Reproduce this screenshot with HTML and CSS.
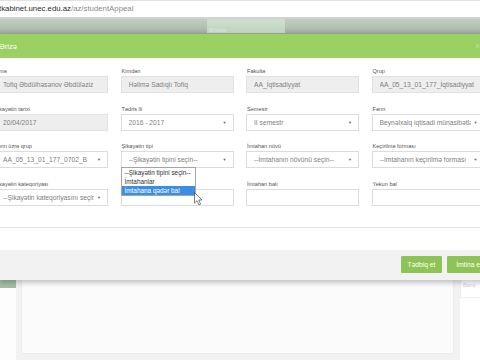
FILE: index.html
```html
<!DOCTYPE html>
<html lang="az">
<head>
<meta charset="utf-8">
<title>studentAppeal</title>
<link rel="stylesheet" href="styles.css">
</head>
<body>
<div class="urlbar"><span class="host">tkabinet.unec.edu.az</span><span class="path">/az/studentAppeal</span></div>
<div class="dimbar">
  <div class="dimbtn">Ərizələr</div>
</div>
<div class="modal">
  <div class="mhead"><span class="title">Ərizə</span><span class="close">×</span></div>
  <div class="mbody">
    <div class="grid">
      <div class="field"><div class="lbl">Kimə</div><div class="ctl ro"><span class="val">Tofiq Əbdülhəsənov Əbdüləziz</span></div></div>
      <div class="field"><div class="lbl">Kimdən</div><div class="ctl ro"><span class="val">Həlimə Sadıqlı Tofiq</span></div></div>
      <div class="field"><div class="lbl">Fakultə</div><div class="ctl ro"><span class="val">AA_İqtisadiyyat</span></div></div>
      <div class="field"><div class="lbl">Qrup</div><div class="ctl ro"><span class="val">AA_05_13_01_177_İqtisadiyyat</span></div></div>

      <div class="field"><div class="lbl">Şikayətin tarixi</div><div class="ctl ro"><span class="val">20/04/2017</span></div></div>
      <div class="field"><div class="lbl">Tədris ili</div><div class="ctl sel"><span class="val">2016 - 2017</span><span class="caret">▼</span></div></div>
      <div class="field"><div class="lbl">Semestr</div><div class="ctl sel"><span class="val">II semestr</span><span class="caret">▼</span></div></div>
      <div class="field"><div class="lbl">Fənn</div><div class="ctl sel"><span class="val">Beynəlxalq iqtisadi münasibətlər</span><span class="caret">▼</span></div></div>

      <div class="field"><div class="lbl">Fənn üzrə qrup</div><div class="ctl sel"><span class="val">AA_05_13_01_177_0702_B</span><span class="caret">▼</span></div></div>
      <div class="field open"><div class="lbl">Şikayətin tipi</div><div class="ctl sel"><span class="val">--Şikayətin tipini seçin--</span><span class="caret">▼</span></div>
        <div class="popup">
          <div class="opt">--Şikayətin tipini seçin--</div>
          <div class="opt">İmtahanlar</div>
          <div class="opt hl">İmtahana qədər bal</div>
        </div>
        <svg class="cursor" width="9" height="14" viewBox="0 0 9 14"><path d="M0.5 0.5 L0.5 11 L3 8.7 L4.9 13 L6.6 12.2 L4.8 8 L8 8 Z" fill="#fff" stroke="#444" stroke-width="0.8" stroke-linejoin="round"/></svg>
      </div>
      <div class="field"><div class="lbl">İmtahan növü</div><div class="ctl sel"><span class="val">--İmtahanın növünü seçin--</span><span class="caret">▼</span></div></div>
      <div class="field"><div class="lbl">Keçirilmə forması</div><div class="ctl sel"><span class="val">--İmtahanın keçirilmə forması</span><span class="caret">▼</span></div></div>

      <div class="field"><div class="lbl">Şikayətin kateqoriyası</div><div class="ctl sel"><span class="val">--Şikayətin kateqoriyasını seçin--</span><span class="caret">▼</span></div></div>
      <div class="field"><div class="lbl">&nbsp;</div><div class="ctl"></div></div>
      <div class="field"><div class="lbl">İmtahan balı</div><div class="ctl"></div></div>
      <div class="field"><div class="lbl">Yekun bal</div><div class="ctl"></div></div>
    </div>
  </div>
  <div class="mgap"></div>
  <div class="mfoot">
    <button class="btn">Tədbiq et</button>
    <button class="btn">İmtina et</button>
  </div>
</div>
<div class="under">
  <div class="lside"><div class="gtab"></div></div>
  <div class="panel"><div class="inner"></div></div>
  <div class="rside"><div class="rbox">Baxış</div></div>
</div>
</body>
</html>
```
FILE: styles.css
```css
html, body {
  margin: 0;
  padding: 0;
  width: 480px;
  height: 360px;
  overflow: hidden;
  background: #ffffff;
  font-family: "Liberation Sans", Arial, sans-serif;
}

.urlbar {
  height: 19px;
  box-sizing: border-box;
  border-top: 1px solid #e2e2e2;
  border-bottom: 2px solid #d2d2d2;
  background: #ffffff;
  font-size: 7.8px;
  line-height: 16px;
  white-space: nowrap;
  margin-left: -1px;
}
.host { color: #2a2a2a; }
.path { color: #8a8a8a; }

.dimbar {
  height: 15px;
  background: linear-gradient(#c2cdc2 0%, #b3c0b3 55%, #a2b0a2 85%, #93a193 100%);
  display: flex;
  padding-left: 207px;
}
.dimbtn {
  width: 78px;
  height: 14px;
  background: linear-gradient(#cfe0cf, #bfd3bf);
  color: rgba(255,255,255,0.45);
  font-size: 5px;
  line-height: 22px;
  padding-left: 2px;
  box-sizing: border-box;
  overflow: hidden;
}

.modal {
  width: 500px;
  background: #ffffff;
  box-shadow: 0 3px 5px rgba(0,0,0,0.22);
  position: relative;
}
.mhead {
  height: 24px;
  background: #9bd063;
  display: flex;
  align-items: center;
  justify-content: space-between;
  padding-right: 20px;
}
.title {
  color: #ffffff;
  font-size: 7.6px;
  margin-left: -1px;
}
.close {
  color: rgba(255,255,255,0.35);
  font-size: 9px;
}

.mbody {
  height: 170px;
  box-sizing: border-box;
  padding-top: 8px;
  border-bottom: 1px solid #e8e8e8;
}
.grid {
  display: grid;
  grid-template-columns: repeat(4, 113px);
  column-gap: 12.5px;
  row-gap: 10.7px;
  margin-left: -5px;
}
.field {
  position: relative;
}
.lbl {
  height: 10px;
  line-height: 10px;
  font-size: 5.6px;
  color: #555555;
  padding-left: 1px;
  white-space: nowrap;
}
.grid > .field:nth-child(4n+1) .lbl {
  margin-left: -2px;
}
.ctl {
  height: 17px;
  box-sizing: border-box;
  border: 1px solid #dcdcdc;
  background: #ffffff;
  display: flex;
  align-items: center;
  padding: 0 4px 0 7px;
  font-size: 6.7px;
  color: #808080;
  white-space: nowrap;
  overflow: hidden;
}
.ctl.ro {
  background: #eeeeee;
  border-color: #e2e2e2;
}
.val {
  flex: 1;
  overflow: hidden;
  line-height: 15px;
}
.caret {
  font-size: 4px;
  color: #666666;
  margin-left: 3px;
  margin-right: 2px;
}

.popup {
  position: absolute;
  left: 0;
  top: 26px;
  width: 73px;
  background: #ffffff;
  border: 1px solid #a5a5a5;
  z-index: 3;
}
.opt {
  height: 9px;
  line-height: 9px;
  font-size: 6.4px;
  color: #333333;
  padding-left: 3px;
  white-space: nowrap;
}
.opt.hl {
  background: #3a8ee6;
  color: #ffffff;
}
.cursor {
  position: absolute;
  left: 73px;
  top: 51px;
  z-index: 4;
  opacity: 0.85;
}

.mgap {
  height: 22px;
  background: #ffffff;
}
.mfoot {
  height: 30px;
  box-sizing: border-box;
  background: #f2f2f2;
  display: flex;
  justify-content: flex-end;
  align-items: flex-start;
  gap: 5px;
  padding: 6px 9px 0 0;
}
.btn {
  height: 17px;
  border: none;
  border-radius: 1px;
  background: #8dc455;
  color: #ffffff;
  font-family: "Liberation Sans", Arial, sans-serif;
  font-size: 6.7px;
  padding: 0;
}
.btn:first-child { width: 41px; }
.btn:last-child { width: 44px; }

.under {
  display: flex;
  height: 80px;
  background: #ffffff;
}
.lside {
  width: 16px;
  background: #fdfdfd;
}
.gtab {
  height: 8px;
  background: #a3bfa3;
}
.panel {
  width: 444px;
  box-sizing: border-box;
  background: #f2f2f2;
  padding: 0 7px 7px 6px;
  display: flex;
}
.inner {
  flex: 1;
  background: #fbfbfb;
  box-shadow: 0 0 2px rgba(0,0,0,0.08);
}
.rside {
  width: 20px;
  background: #ffffff;
}
.rbox {
  height: 17px;
  border-left: 1px solid #eeeeee;
  border-bottom: 1px solid #f3f3f3;
  font-size: 5px;
  color: #d6d6d6;
  line-height: 11px;
  padding-left: 2px;
  overflow: hidden;
}
```
